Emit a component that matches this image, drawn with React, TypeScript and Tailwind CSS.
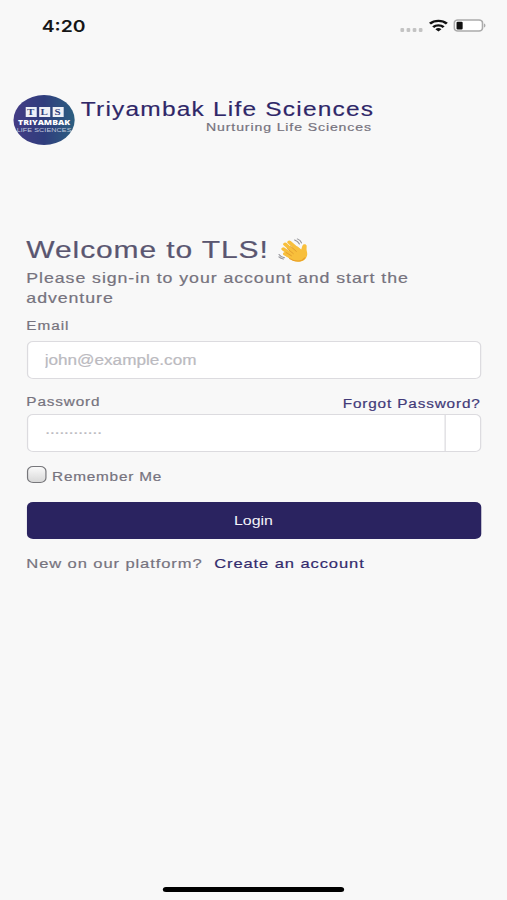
import { useState } from 'react';

function StatusBar() {
  return (
    <div className="flex h-[50px] items-start justify-between pl-[34px] pr-[17px]">
      <span className="mt-[16.5px] font-['Inter'] text-[15.8px] font-semibold leading-[20px] text-[#161616]">4:20</span>
      <div className="mt-[19px] flex items-start">
        <div className="mt-[9px] flex gap-[2px]">
          <i className="h-[4px] w-[3px] rounded-[1px] bg-[#c3c3c3]" />
          <i className="h-[4px] w-[3px] rounded-[1px] bg-[#c3c3c3]" />
          <i className="h-[4px] w-[3px] rounded-[1px] bg-[#c3c3c3]" />
          <i className="h-[4px] w-[3px] rounded-[1px] bg-[#c3c3c3]" />
        </div>
        <svg className="ml-[5px] h-[13px] w-[16px]" viewBox="0 0 16 13" fill="none" stroke="#111" strokeWidth="2.3">
          <path d="M1.1 4.7a10 10 0 0 1 13.8 0" />
          <path d="M3.7 8.1a6.2 6.2 0 0 1 8.6 0" />
          <path d="M5.5 10.2a3.6 3.6 0 0 1 5 0L8 12.6z" fill="#111" stroke="none" />
        </svg>
        <svg className="ml-[4px] h-[13px] w-[27px]" viewBox="0 0 27 13">
          <rect x="1" y="1" width="23" height="11" rx="2.8" fill="#fff" stroke="#ababab" strokeWidth="1.3" />
          <rect x="2.8" y="2.7" width="5" height="7.8" rx="1" fill="#111" />
          <path d="M25.2 4.5c1.6.6 1.6 3.4 0 4z" fill="#ababab" />
        </svg>
      </div>
    </div>
  );
}

function Logo() {
  return (
    <div className="flex h-[50px] w-[50px] flex-col items-center overflow-hidden rounded-full bg-linear-to-r from-[#443c85] via-[#2f3d7d] to-[#2c5f80] pt-[12px] text-white">
      <div className="flex gap-[2px] font-['Liberation_Serif'] text-[9px] font-bold leading-[10px] text-[#34417c]">
        <span className="h-[10px] w-[9px] bg-[#eef0f6] text-center">T</span>
        <span className="h-[10px] w-[9px] bg-[#eef0f6] text-center">L</span>
        <span className="h-[10px] w-[9px] bg-[#eef0f6] text-center">S</span>
      </div>
      <span className="mt-[2px] whitespace-nowrap font-['Open_Sans'] text-[7px] font-extrabold leading-[8px]">TRIYAMBAK</span>
      <span className="whitespace-nowrap font-['Liberation_Sans'] text-[5.8px] leading-[6px] tracking-[0.1px] text-[#c3cbdf]">LIFE SCIENCES</span>
    </div>
  );
}

function WavingHand() {
  return (
    <svg className="h-[25px] w-[25px]" viewBox="0 0 25 25" fill="none" strokeLinecap="round" strokeLinejoin="round">
      <g stroke="#f8bf3c" strokeWidth="3.3">
        <path d="M5.8 6.2 13 14" />
        <path d="M9.2 4.2 16.5 12" />
        <path d="M4.4 11 11 17" />
        <path d="M5.8 15.8 12 20" />
      </g>
      <path d="M10 9.5 16 8.6l3 2.8c.6-1.6.6-3.6 1.7-4.8 1-.9 2.6-.3 2.7 1.1.1 1.8-.3 3.3.1 5.2.8 3.6.4 6.6-1.9 8.9-2.6 2.5-6.5 2.6-9.6.7L6.4 18z" fill="#f8bf3c" />
      <path d="m7.5 10.6 5 5M10 8l5 5.4M6.5 14.4l4.5 3.4" stroke="#dc962a" strokeWidth=".7" />
      <path d="M9.5 20.6c4.8 3.6 10.2 3.1 12.5-.9" stroke="#e8a02b" strokeWidth="1" />
      <path d="M13.6 2c1.9.8 3.2 2.2 3.9 4M15.8.9c1.7.9 2.9 2.2 3.4 4M.9 16.4c.9 1.7 2.4 2.8 4.4 3.3M.8 18.9c1 1.1 2.1 1.8 3.6 2.2" stroke="#96969c" strokeWidth="1" />
    </svg>
  );
}

export default function App() {
  const [email, setEmail] = useState('');
  const [password, setPassword] = useState('');

  return (
    <div className="h-[900px] w-[507px] overflow-hidden bg-[#f8f8f8]">
      {/* 414pt wide phone layout, stretched to the window */}
      <div className="flex h-[900px] w-[414px] origin-top-left scale-x-[1.2246] flex-col font-['Liberation_Sans',sans-serif] text-[#76737e]">
        <StatusBar />
        <header className="mt-[45px] flex h-[50px] pl-[11px]">
          <Logo />
          <div className="ml-[5px] mt-[4px] flex flex-col items-end">
            <h1 className="whitespace-nowrap text-[20px] leading-[20px] tracking-[0.98px] text-[#2f2768] [-webkit-text-stroke:0.15px]">Triyambak Life Sciences</h1>
            <p className="mr-[2px] mt-[1px] whitespace-nowrap text-[11.5px] leading-[14px] tracking-[0.72px] [-webkit-text-stroke:0.2px]">Nurturing Life Sciences</p>
          </div>
        </header>

        <main className="mt-[91px] flex w-[371px] flex-col self-center [-webkit-text-stroke:0.2px]">
          <h2 className="flex h-[28px] items-center whitespace-nowrap text-[24.5px] leading-[28px] tracking-[0.73px] text-[#5a5670]">
            Welcome to TLS!
            <span className="ml-[8px]"><WavingHand /></span>
          </h2>
          <p className="mt-[4px] text-[14.5px] leading-[20px] tracking-[0.76px]">
            Please sign-in to your account and start the <br />adventure
          </p>
          <label className="mt-[11px] text-[12.5px] leading-[14px] tracking-[0.8px]">Email</label>
          <input
            className="mt-[8px] h-[38px] rounded-[5px] border border-[#dcdbdf] bg-white px-[14px] text-[14px] outline-none placeholder:text-[#bbbac0]"
            placeholder="john@example.com"
            value={email}
            onChange={(e) => setEmail(e.target.value)}
          />
          <div className="mt-[15px] flex h-[20px] justify-between text-[12.5px] leading-[16px] tracking-[0.7px]">
            <label>Password</label>
            <a href="#" className="mt-[2px] text-[#423a79]">Forgot Password?</a>
          </div>
          <div className="flex h-[38px] overflow-hidden rounded-[5px] border border-[#dcdbdf] bg-white">
            <input
              type="password"
              className="min-w-0 flex-1 px-[14px] pb-[2px] text-[14px] tracking-[-0.8px] outline-none placeholder:text-[#bbbac0]"
              placeholder="············"
              value={password}
              onChange={(e) => setPassword(e.target.value)}
            />
            <button className="w-[29px] border-l border-[#dcdbdf]" aria-label="Show password" />
          </div>
          <label className="mt-[14px] flex h-[18px] items-start text-[12.5px] leading-[18px] tracking-[0.65px]">
            <input type="checkbox" className="h-[17px] w-[16px] appearance-none rounded-[5px] border border-[#77777b] bg-linear-to-b from-[#fafafa] to-[#d8d8d8]" />
            <span className="ml-[5px] mt-[2px]">Remember Me</span>
          </label>
          <button className="mt-[18px] h-[37px] rounded-[5px] bg-[#2a2360] text-[13px] text-[#f5f4fa] [-webkit-text-stroke:0px]">Login</button>
          <p className="mt-[15px] flex whitespace-nowrap text-[13.5px] leading-[20px] tracking-[0.74px]">
            New on our platform?
            <a href="#" className="ml-[9.5px] text-[#332b6d]">Create an account</a>
          </p>
        </main>

        <div className="mb-[8px] mt-auto h-[5px] w-[148px] self-center rounded-full bg-black" />
      </div>
    </div>
  );
}
